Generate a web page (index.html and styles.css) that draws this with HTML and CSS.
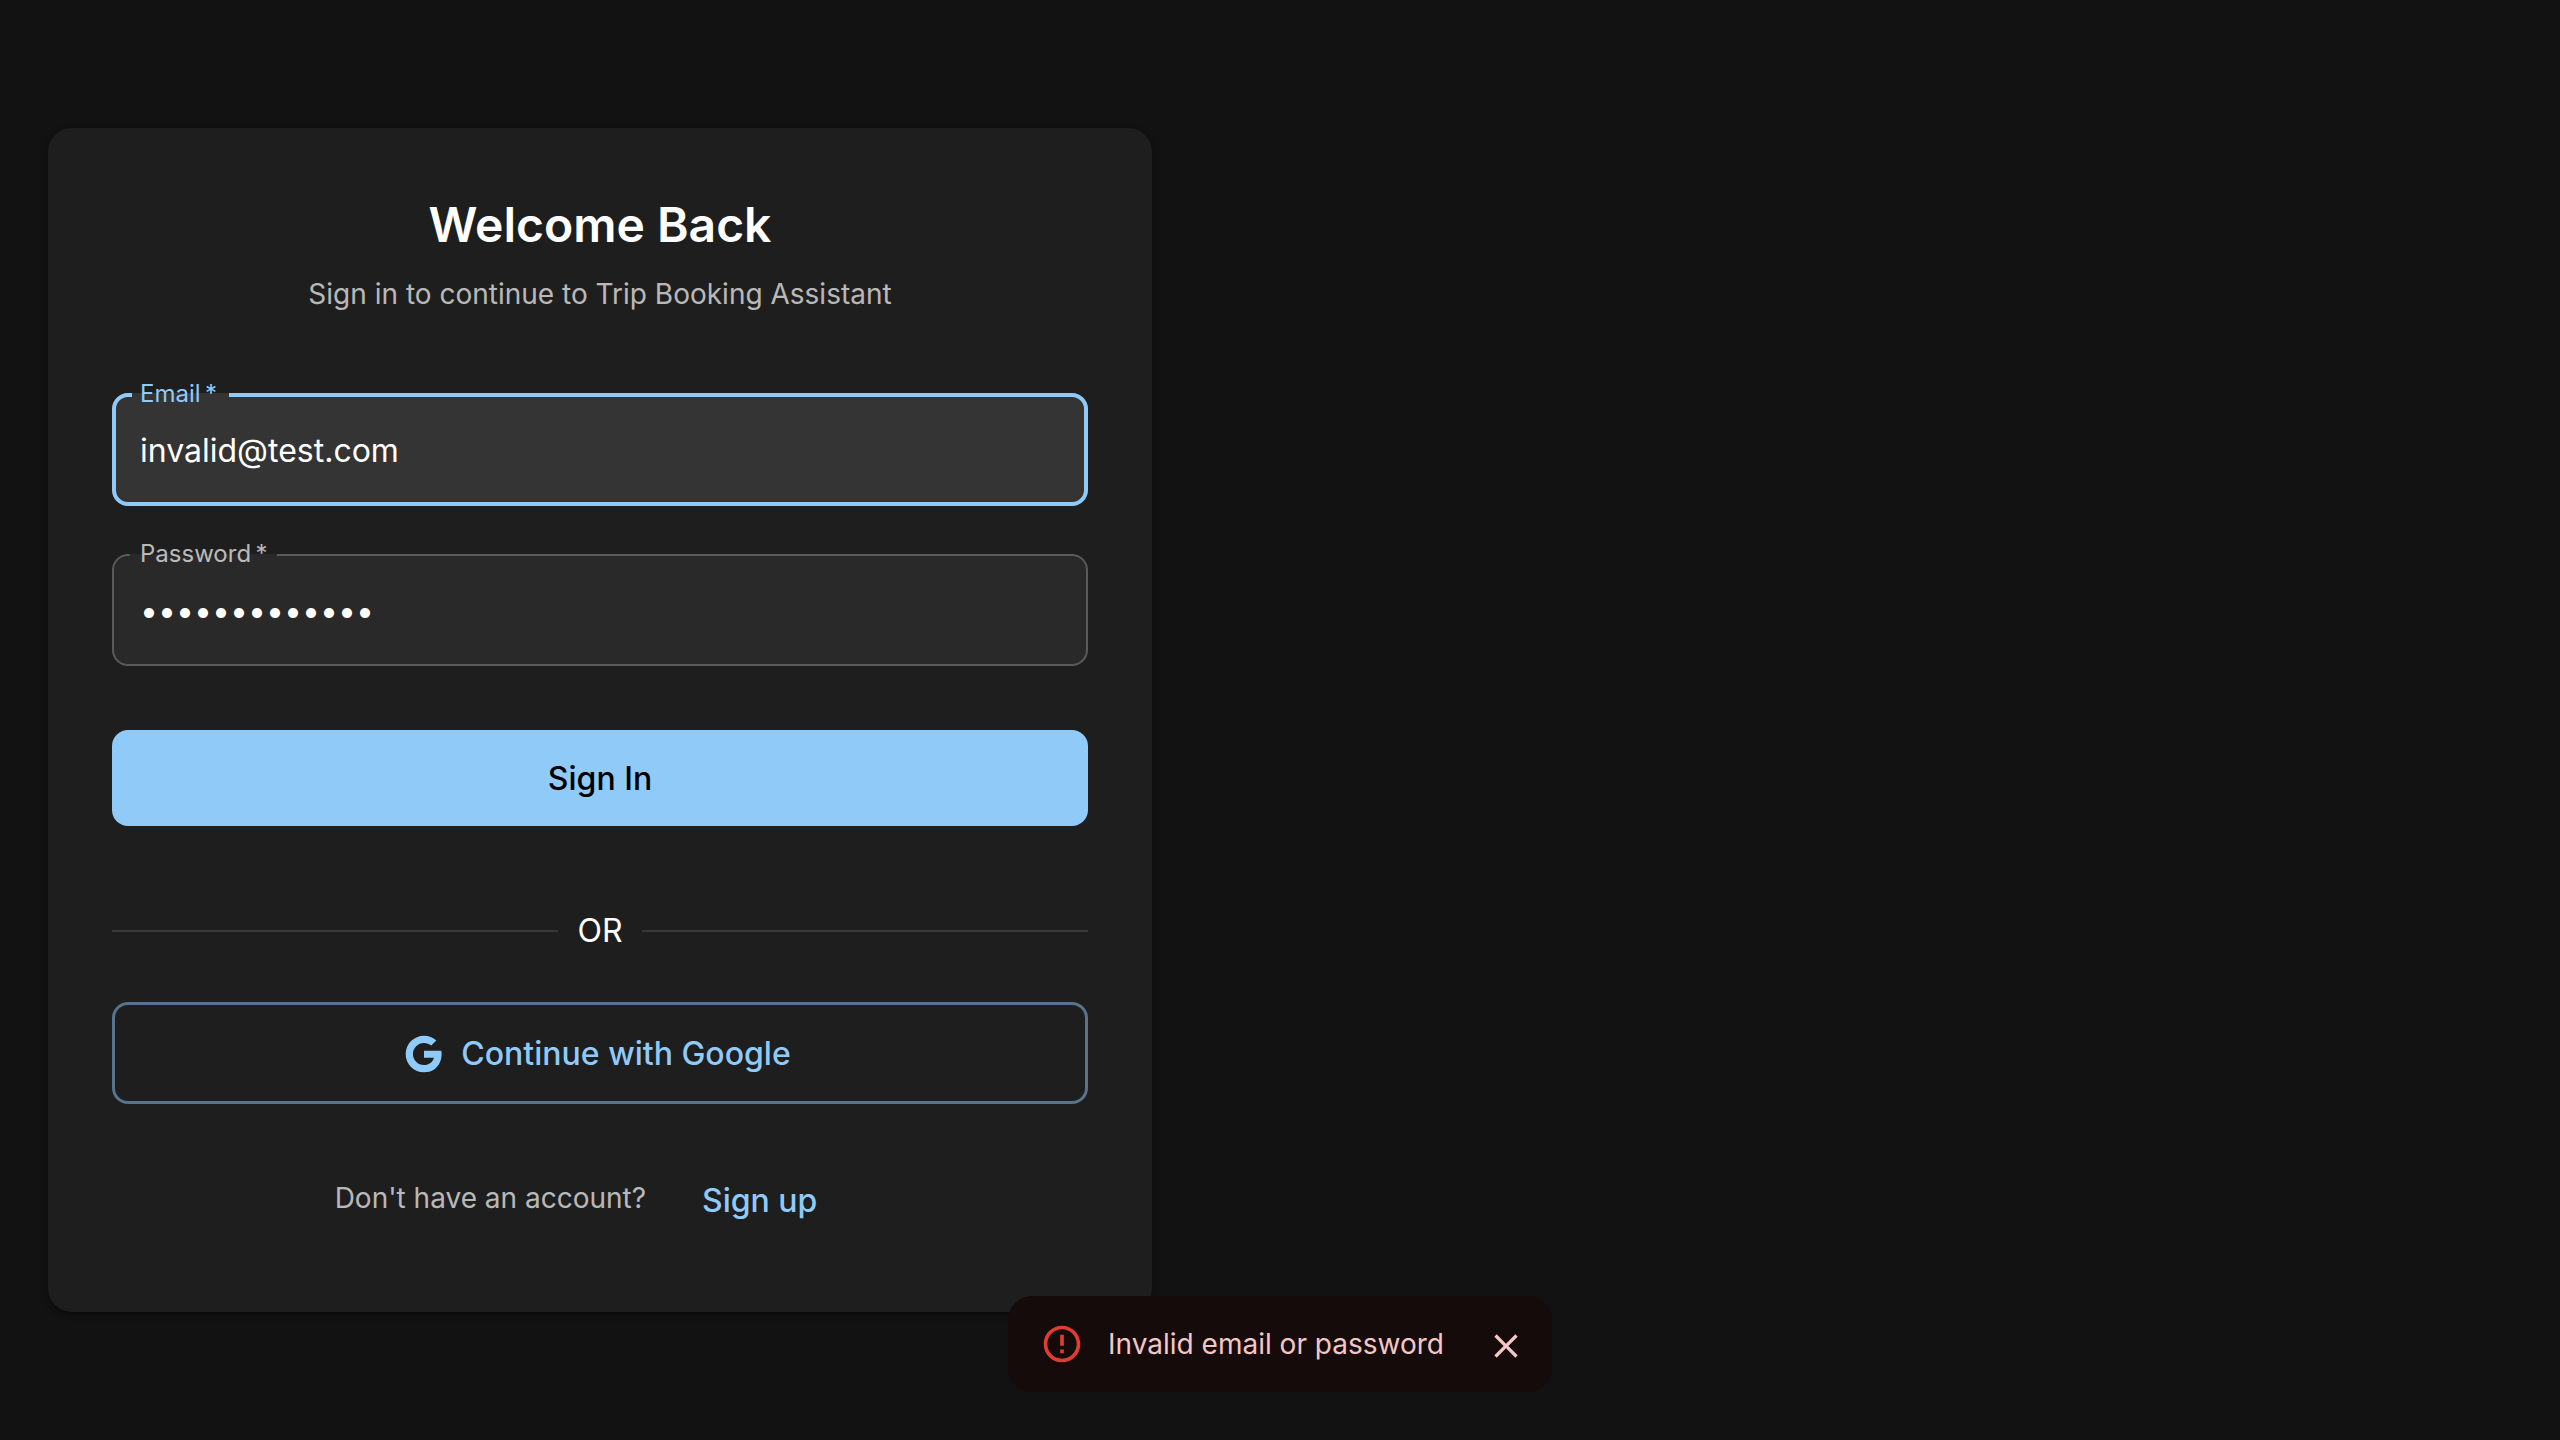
FILE: index.html
```html
<!DOCTYPE html>
<html lang="en">
<head>
  <meta charset="utf-8">
  <meta name="viewport" content="width=device-width, initial-scale=1">
  <title>Sign in – Trip Booking Assistant</title>
  <link rel="stylesheet" href="styles.css">
</head>
<body>
  <main class="page">
    <section class="card">
      <h1 class="title">Welcome Back</h1>
      <p class="subtitle">Sign in to continue to Trip Booking Assistant</p>

      <form class="form">
        <fieldset class="field field-focused">
          <legend class="field-legend"><label for="email">Email&#8201;*</label></legend>
          <input class="field-input" id="email" type="email" value="invalid@test.com" required>
        </fieldset>
        <fieldset class="field">
          <legend class="field-legend"><label for="password">Password&#8201;*</label></legend>
          <input class="field-input" id="password" type="password" value="wrongpassword" required>
        </fieldset>
        <button class="button button-primary" type="submit">Sign In</button>
      </form>

      <div class="divider">OR</div>

      <button class="button button-outlined" type="button">
        <svg class="icon google-icon" viewBox="0 0 24 24" aria-hidden="true"><path d="M12.545,10.239v3.821h5.445c-0.712,2.315-2.647,3.972-5.445,3.972c-3.332,0-6.033-2.701-6.033-6.032s2.701-6.032,6.033-6.032c1.498,0,2.866,0.549,3.921,1.453l2.814-2.814C17.503,2.988,15.139,2,12.545,2C7.021,2,2.543,6.477,2.543,12s4.478,10,10.002,10c8.396,0,10.249-7.85,9.426-11.748L12.545,10.239z"/></svg>
        Continue with Google
      </button>

      <p class="signup">Don't have an account? <button class="button button-text" type="button">Sign up</button></p>
    </section>
  </main>

  <div class="snackbar">
    <div class="alert" role="alert">
      <svg class="icon alert-icon" viewBox="0 0 24 24" aria-hidden="true"><path d="M11 15h2v2h-2zm0-8h2v6h-2zm.99-5C6.47 2 2 6.48 2 12s4.47 10 9.99 10C17.52 22 22 17.52 22 12S17.52 2 11.99 2zM12 20c-4.42 0-8-3.58-8-8s3.58-8 8-8 8 3.58 8 8-3.58 8-8 8z"/></svg>
      <span class="alert-message">Invalid email or password</span>
      <button class="alert-close" type="button" aria-label="Close">
        <svg class="close-icon" viewBox="0 0 24 24" aria-hidden="true"><path d="M19 6.41L17.59 5 12 10.59 6.41 5 5 6.41 10.59 12 5 17.59 6.41 19 12 13.41 17.59 19 19 17.59 13.41 12z"/></svg>
      </button>
    </div>
  </div>
</body>
</html>
```
FILE: styles.css
```css
:root {
  --primary: #90caf9;
  --text: #fff;
  --text-muted: rgba(255, 255, 255, 0.7);
}

* {
  box-sizing: border-box;
}

body {
  margin: 0;
  min-height: 100vh;
  background: #121212;
  color: var(--text);
  font-family: Inter, "Liberation Sans", sans-serif;
  font-size: 32px;
  line-height: 48px;
}

button,
input {
  font: inherit;
  color: inherit;
}

.page {
  max-width: 1200px;
  padding: 128px 48px;
}

.card {
  display: flex;
  flex-direction: column;
  padding: 64px;
  border-radius: 24px;
  background: #1e1e1e;
  box-shadow:
    0 4px 2px -2px rgba(0, 0, 0, 0.2),
    0 4px 4px 0 rgba(0, 0, 0, 0.14),
    0 2px 10px 0 rgba(0, 0, 0, 0.12);
}

.title {
  margin: 0 0 14px;
  font-size: 48px;
  font-weight: 600;
  line-height: 66px;
  text-align: center;
}

.subtitle {
  margin: 0 0 68px;
  color: var(--text-muted);
  font-size: 28px;
  line-height: 44px;
  text-align: center;
}

.form {
  display: flex;
  flex-direction: column;
}

.field {
  min-width: 0;
  margin: 0 0 38px;
  padding: 0 16px 10px;
  border: 2px solid rgba(255, 255, 255, 0.23);
  border-radius: 16px;
  background: rgba(255, 255, 255, 0.05);
}

.field-legend {
  padding: 0 10px 2px;
  color: var(--text-muted);
  font-size: 24px;
  line-height: 20px;
}

.field-input {
  display: block;
  width: 100%;
  height: 88px;
  padding: 0 10px;
  border: 0;
  outline: 0;
  background: transparent;
}

.field-focused {
  padding-bottom: 8px;
  border: 4px solid var(--primary);
  background: rgba(255, 255, 255, 0.1);
}

.field-focused .field-legend {
  padding-right: 12px;
  padding-left: 8px;
  color: var(--primary);
}

.field-focused .field-input {
  padding: 0 8px;
}

.button {
  display: flex;
  align-items: center;
  justify-content: center;
  min-height: 96px;
  padding: 2px 48px 0;
  border: 0;
  border-radius: 16px;
  background: transparent;
  color: var(--primary);
  font-size: 32px;
  font-weight: 500;
  line-height: 48px;
  cursor: pointer;
}

.button-primary {
  margin-top: 26px;
  background: var(--primary);
  color: #000;
}

.button-outlined {
  min-height: 102px;
  border: 3px solid rgba(144, 202, 249, 0.5);
}

.button-text {
  display: inline-flex;
  vertical-align: middle;
}

.icon {
  flex: none;
  width: 44px;
  height: 44px;
  fill: currentColor;
}

.google-icon {
  margin: 0 16px 0 -8px;
}

.divider {
  display: flex;
  align-items: center;
  gap: 19px;
  margin: 80px 0 46px;
  line-height: 50px;
}

.divider::before,
.divider::after {
  content: "";
  flex: 1;
  height: 2px;
  background: rgba(255, 255, 255, 0.12);
}

.signup {
  margin: 48px 0 0;
  color: var(--text-muted);
  font-size: 28px;
  line-height: 40px;
  text-align: center;
}

.snackbar {
  position: fixed;
  right: 0;
  bottom: 48px;
  left: 0;
  display: flex;
  justify-content: center;
  pointer-events: none;
}

.alert {
  display: flex;
  align-items: center;
  padding: 12px 16px 12px 32px;
  border-radius: 24px;
  background: #160b0b;
  color: #f4c7c7;
  pointer-events: auto;
}

.alert-icon {
  margin-right: 24px;
  color: #e03c31;
}

.alert-message {
  padding: 16px 0;
  font-size: 28px;
  line-height: 40px;
}

.alert-close {
  display: flex;
  margin: 4px 0 0 32px;
  padding: 10px;
  border: 0;
  border-radius: 50%;
  background: transparent;
  cursor: pointer;
}

.close-icon {
  width: 40px;
  height: 40px;
  fill: currentColor;
}
```
